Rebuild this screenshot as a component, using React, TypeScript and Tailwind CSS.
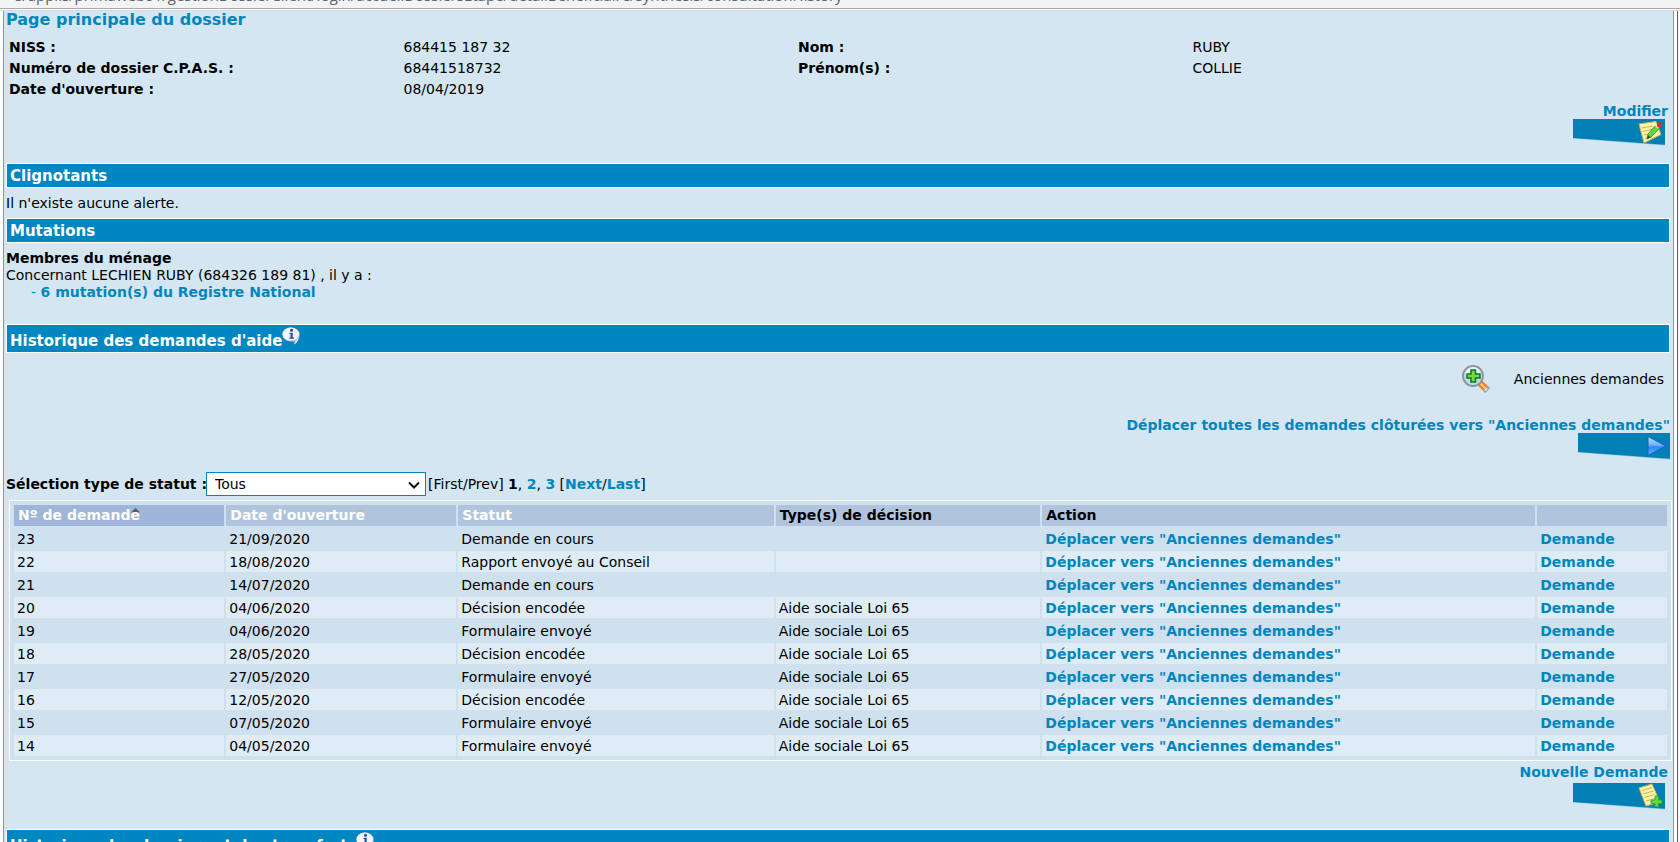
import type { ReactNode } from "react";

type Demande = {
  id: number;
  date: string;
  statut: string;
  type: string;
};

const demandes: Demande[] = [
  { id: 23, date: "21/09/2020", statut: "Demande en cours", type: "" },
  { id: 22, date: "18/08/2020", statut: "Rapport envoyé au Conseil", type: "" },
  { id: 21, date: "14/07/2020", statut: "Demande en cours", type: "" },
  { id: 20, date: "04/06/2020", statut: "Décision encodée", type: "Aide sociale Loi 65" },
  { id: 19, date: "04/06/2020", statut: "Formulaire envoyé", type: "Aide sociale Loi 65" },
  { id: 18, date: "28/05/2020", statut: "Décision encodée", type: "Aide sociale Loi 65" },
  { id: 17, date: "27/05/2020", statut: "Formulaire envoyé", type: "Aide sociale Loi 65" },
  { id: 16, date: "12/05/2020", statut: "Décision encodée", type: "Aide sociale Loi 65" },
  { id: 15, date: "07/05/2020", statut: "Formulaire envoyé", type: "Aide sociale Loi 65" },
  { id: 14, date: "04/05/2020", statut: "Formulaire envoyé", type: "Aide sociale Loi 65" },
];

const Link = ({ children }: { children: ReactNode }) => (
  <a href="#" className="font-bold text-[#0086be]">
    {children}
  </a>
);

const InfoIcon = () => (
  <svg width="18" height="18" viewBox="0 0 18 18" aria-hidden="true">
    <path d="M8.500 12.500L17.500 8c-.3 4-2.200 7.500-5.500 9.800.2-2.200-1-4-3.500-5.300z" fill="#a3a0ba" />
    <path d="M13 12l4.200-3c-.4 3.400-1.900 6.200-4.200 8.200.6-1.900.5-3.500 0-5.200z" fill="#efedf8" />
    <ellipse cx="9" cy="7.500" rx="8.700" ry="7" fill="#b9b8d6" />
    <ellipse cx="8.800" cy="7.200" rx="8.200" ry="6.600" fill="#f6f5fd" />
    <circle cx="9.500" cy="3.300" r="1.500" fill="#1c4fa8" />
    <path d="M7.500 5.800h3.200v4.700h1.300v1.200H7.300v-1.200h1.200V7h-1z" fill="#1c4fa8" />
  </svg>
);

const EditNote = () => (
  <>
    <path d="M66 5l17-2.500 5 13L71 24z" fill="#fdf3a6" stroke="#c9b458" strokeWidth="1" />
    <path d="M69 9l11-2M70 12.500l11-2.500M71 16l9-2M72 19.500l7-2" stroke="#cdb35f" strokeWidth="1" />
    <path d="M83 6l4 3-9 9-4 2 1-5z" fill="#5fd83b" stroke="#2c8f2a" strokeWidth="0.8" />
    <path d="M74 20l1-4 2.500 2.500z" fill="#3b4a3a" />
    <path d="M82.500 5.500l3 3.500" stroke="#e6e9ec" strokeWidth="2" />
    <circle cx="86.500" cy="6" r="2.600" fill="#d8322a" />
  </>
);

const PlayArrow = () => (
  <>
    <defs>
      <linearGradient id="play" x1="0" y1="0" x2="0" y2="1">
        <stop offset="0" stopColor="#c4e0ff" />
        <stop offset="0.45" stopColor="#6db0ff" />
        <stop offset="0.55" stopColor="#2f88f5" />
        <stop offset="1" stopColor="#5fb0ff" />
      </linearGradient>
    </defs>
    <path d="M70 3.500v19l18-9.500z" fill="url(#play)" stroke="#1561c4" strokeWidth="1" />
  </>
);

const AddNote = () => (
  <>
    <path d="M66 5l13-4 8 18-14 4z" fill="#fdf3a6" stroke="#c9b458" strokeWidth="1" />
    <path d="M69 7.500l10-3M70 11l10.500-3M71.500 14.500l10-3M73 18l9-2.500" stroke="#cdb35f" strokeWidth="1" />
    <path d="M82 13h3.500v4H89v3.500h-3.500V24H82v-3.500h-4V17h4z" fill="#5fd83b" stroke="#2c9a2a" strokeWidth="0.8" />
  </>
);

const TabButton = ({ label, children }: { label: string; children: ReactNode }) => (
  <button type="button" aria-label={label} className="block">
    <svg width="92" height="27" viewBox="0 0 92 27" aria-hidden="true">
      <path d="M0 19.500L92 26.500V25L0 18z" fill="#8fc3df" />
      <path d="M0 0h92v25.700L0 19z" fill="#0080b5" />
      {children}
    </svg>
  </button>
);

const Magnifier = () => (
  <svg width="28" height="28" viewBox="0 0 28 28" aria-hidden="true">
    <path d="M15.500 20l4.500-4.500 7.500 7-4.500 5z" fill="#f47b20" />
    <path d="M18.500 18.500l6 6" stroke="#ffd08a" strokeWidth="2" />
    <path d="M28 23l-4.500 5-2.500-2 4.500-5z" fill="#a9a49e" />
    <path d="M25 23.500l-2 2" stroke="#f4f1ec" strokeWidth="1.500" />
    <circle cx="11" cy="11" r="10" fill="#b9dcf1" stroke="#8d9399" strokeWidth="1.800" />
    <path d="M3 10a8 8 0 0 1 16 0c-4-2.500-11-2.500-16 0z" fill="#e8f6fd" />
    <path d="M9 5h4.500v4H18v4h-4.500v4H9v-4H5V9h4z" fill="#6fdb45" stroke="#14771c" strokeWidth="1.500" />
  </svg>
);

const SectionBar = ({ title, info = false }: { title: string; info?: boolean }) => (
  <h2
    className={
      info
        ? "flex h-[29px] items-start border border-white bg-[#0086c0] pt-[2px] pl-[3px] text-[15px] font-bold text-white"
        : "flex h-[25px] items-center border border-white bg-[#0086c0] pl-[3px] text-[15px] font-bold text-white"
    }
  >
    <span className={info ? "pt-1 leading-5" : "leading-5"}>{title}</span>
    {info && <InfoIcon />}
  </h2>
);

const SortHeader = ({ label, active = false }: { label: string; active?: boolean }) => (
  <a href="#" className="relative isolate inline-block text-white">
    {label}
    <svg
      className="absolute top-[3px] right-0 -z-10"
      width="9"
      height="12"
      viewBox="0 0 9 12"
      aria-hidden="true"
    >
      <path d="M0 4.500L4.500 0 9 4.500z" fill={active ? "#5d5d55" : "#c0bcbc"} />
      <path d="M0 5.500h9L4.500 11z" fill={active ? "#a9a9a0" : "#c4c0c0"} />
    </svg>
  </a>
);

const Fiche = () => (
  <dl className="mt-2 grid grid-cols-[19fr_19fr_19fr_23fr] pl-[3px] leading-[21px]">
    <dt className="font-bold">NISS :</dt>
    <dd>684415 187 32</dd>
    <dt className="font-bold">Nom :</dt>
    <dd>RUBY</dd>
    <dt className="font-bold">Numéro de dossier C.P.A.S. :</dt>
    <dd>68441518732</dd>
    <dt className="font-bold">Prénom(s) :</dt>
    <dd>COLLIE</dd>
    <dt className="font-bold">Date d'ouverture :</dt>
    <dd>08/04/2019</dd>
  </dl>
);

const StatutFilter = () => (
  <div className="mt-3 flex h-6 items-center">
    <label htmlFor="statut" className="w-[200px] font-bold whitespace-nowrap">
      Sélection type de statut :
    </label>
    <div className="relative">
      <select
        id="statut"
        className="block h-6 w-[220px] appearance-none border border-[#0086be] bg-white pl-2 text-[14px] leading-5"
      >
        <option>Tous</option>
      </select>
      <svg
        className="pointer-events-none absolute top-[9px] right-[6px]"
        width="12"
        height="8"
        viewBox="0 0 12 8"
        aria-hidden="true"
      >
        <path d="M1 1.500l5 5 5-5" fill="none" stroke="#111" strokeWidth="2" />
      </svg>
    </div>
    <nav className="pl-[2px]">
      [First/Prev] <b>1</b>, <Link>2</Link>, <Link>3</Link> [<Link>Next</Link>/<Link>Last</Link>]
    </nav>
  </div>
);

const DemandesTable = () => (
  <div className="mt-1 ml-[3px] border border-white bg-[#cfe0ef] p-[2px]">
    <table className="w-full table-fixed border-separate border-spacing-[2px]">
      <colgroup>
        <col className="w-[12.800%]" />
        <col className="w-[14%]" />
        <col className="w-[19.200%]" />
        <col className="w-[16.100%]" />
        <col />
        <col className="w-[7.900%]" />
      </colgroup>
      <thead>
        <tr className="h-[21px] bg-[#b0c4de] text-left leading-[21px]">
          <th className="bg-[#9fb5d9] pl-1">
            <SortHeader label="Nº de demande" active />
          </th>
          <th className="pl-1">
            <SortHeader label="Date d'ouverture" />
          </th>
          <th className="pl-1">
            <SortHeader label="Statut" />
          </th>
          <th className="pl-1">Type(s) de décision</th>
          <th className="pl-1">Action</th>
          <th />
        </tr>
      </thead>
      <tbody>
        {demandes.map((d) => (
          <tr key={d.id} className="h-[21px] leading-5 even:bg-[#dfecf5]">
            <td className="pt-px pl-[3px]">{d.id}</td>
            <td className="pt-px pl-[3px]">{d.date}</td>
            <td className="pt-px pl-[3px]">{d.statut}</td>
            <td className="pt-px pl-[3px]">{d.type}</td>
            <td className="pt-px pl-[3px]">
              <Link>Déplacer vers "Anciennes demandes"</Link>
            </td>
            <td className="pt-px pl-[3px]">
              <Link>Demande</Link>
            </td>
          </tr>
        ))}
      </tbody>
    </table>
  </div>
);

export default function App() {
  return (
    <div className="flex h-screen flex-col overflow-hidden bg-white font-['DejaVu_Sans',Verdana,sans-serif] text-[14px] text-black">
      {/* Lower edge of the address bar */}
      <div className="flex h-[9px] shrink-0 items-end overflow-hidden border-b border-[#a9abad] bg-[#f1f3f4] pb-[3px] pl-[15px] font-['Open_Sans',sans-serif] text-[15px] leading-5 whitespace-pre text-[#5f6368]">
        s/applis/primaweb01/gestionDossierClient/login/accueilDossiersEtape/detailBeneficiaire/synthesis/consultationHistory
      </div>
      <div className="h-[2px] shrink-0 border-b border-[#d9dcde] bg-white" />

      <div className="mr-[2px] ml-[3px] flex-1 border-r border-[#0078ae] pr-[3px]">
        <main className="border-x border-[#6c9fd0] bg-[#d4e6f2] pr-px pl-[2px]">
          <div className="pr-[2px]">
            <h1 className="text-[16px] leading-[18px] font-bold text-[#0086be]">
              Page principale du dossier
            </h1>
            <Fiche />
            <div className="mt-[3px] mb-[17px] flex flex-col items-end pr-[2px] leading-4">
              <Link>Modifier</Link>
              <div className="pr-[3px]">
                <TabButton label="Modifier le dossier">
                  <EditNote />
                </TabButton>
              </div>
            </div>

            <SectionBar title="Clignotants" />
            <p className="my-[7px] leading-4">Il n'existe aucune alerte.</p>

            <SectionBar title="Mutations" />
            <div className="mt-[7px] mb-[23px] leading-[17px]">
              <h3 className="font-bold">Membres du ménage</h3>
              <p>Concernant LECHIEN RUBY (684326 189 81) , il y a :</p>
              <p className="pl-[25px] text-[#0086be]">
                - <Link>6 mutation(s) du Registre National</Link>
              </p>
            </div>

            <SectionBar title="Historique des demandes d'aide" info />
            <div className="mt-3 flex h-7 items-center justify-end gap-6 pr-[6px]">
              <button type="button" aria-label="Afficher les anciennes demandes">
                <Magnifier />
              </button>
              <span>Anciennes demandes</span>
            </div>
            <div className="mt-6 flex flex-col items-end leading-4">
              <Link>Déplacer toutes les demandes clôturées vers "Anciennes demandes"</Link>
              <TabButton label="Déplacer les demandes clôturées">
                <PlayArrow />
              </TabButton>
            </div>
            <StatutFilter />
          </div>

          <DemandesTable />

          <div className="pr-[2px]">
            <div className="mt-[3px] mb-[19px] flex flex-col items-end gap-[3px] pr-[2px] leading-4">
              <Link>Nouvelle Demande</Link>
              <div className="pr-[3px]">
                <TabButton label="Créer une demande">
                  <AddNote />
                </TabButton>
              </div>
            </div>
            <SectionBar title="Historique des dossiers et des transferts" info />
          </div>
        </main>
      </div>
    </div>
  );
}
